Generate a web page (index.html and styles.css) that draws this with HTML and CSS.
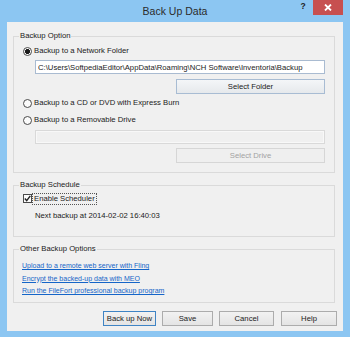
FILE: index.html
```html
<!DOCTYPE HTML>
<html>
<head>
    <meta charset="utf-8">
    <title>Back Up Data</title>
    <link rel="stylesheet" href="styles.css">
</head>

<body>
    <div class='window'>
        <div class='titlebar'>
            <span class='title'>Back Up Data</span>
            <span class='help-btn'>?</span>
            <span class='close-btn'>
                <svg width="8" height="7" viewBox="0 0 8 7">
                    <path d="M1 0.5 L7 6.5 M7 0.5 L1 6.5" stroke="#fff" stroke-width="1.8"/>
                </svg>
            </span>
        </div>
        <div class='client'>
            <fieldset class='group'>
                <legend>Backup Option</legend>
                <div class='group-body option-body'>
                    <label class='option'><input type='radio' name='dest' checked> Backup to a Network Folder</label>
                    <input type='text' class='path' value='C:\Users\SoftpediaEditor\AppData\Roaming\NCH Software\Inventoria\Backup'>
                    <button class='btn btn-side btn-blue'>Select Folder</button>
                    <label class='option option-cd'><input type='radio' name='dest'> Backup to a CD or DVD with Express Burn</label>
                    <label class='option option-drive'><input type='radio' name='dest'> Backup to a Removable Drive</label>
                    <input type='text' class='path path-disabled' value='' disabled>
                    <button class='btn btn-side btn-disabled' disabled>Select Drive</button>
                </div>
            </fieldset>

            <fieldset class='group group-schedule'>
                <legend>Backup Schedule</legend>
                <div class='group-body schedule-body'>
                    <label class='check'>
                        <span class='checkbox'>
                            <svg width="7" height="7" viewBox="0 0 7 7">
                                <path d="M0.8 3.6 L2.7 5.6 L6.3 0.9" stroke="#222" stroke-width="1.4" fill="none"/>
                            </svg>
                        </span>
                        <span class='focus'>Enable Scheduler</span>
                    </label>
                    <div class='next'>Next backup at 2014-02-02 16:40:03</div>
                </div>
            </fieldset>

            <fieldset class='group group-other'>
                <legend>Other Backup Options</legend>
                <div class='group-body links'>
                    <a href='#'>Upload to a remote web server with Fling</a>
                    <a href='#'>Encrypt the backed-up data with MEO</a>
                    <a href='#'>Run the FileFort professional backup program</a>
                </div>
            </fieldset>

            <div class='actions'>
                <button class='btn btn-default btn-now'>Back up Now</button>
                <button class='btn btn-save'>Save</button>
                <button class='btn btn-cancel'>Cancel</button>
                <button class='btn btn-help'>Help</button>
            </div>
        </div>
    </div>
</body>
</html>
```

FILE: styles.css
```css
html, body{
    margin: 0;
    padding: 0;
}
body{
    font-family: "Liberation Sans", Arial, sans-serif;
    font-size: 7.7px;
    line-height: 10px;
    color: #1a1a1a;
}
.window{
    width: 350px;
    height: 337px;
    background-color: #8cc6f2;
    display: flex;
    flex-direction: column;
}
.titlebar{
    height: 22px;
    display: flex;
    padding-left: 52px;
}
.title{
    flex: 1;
    text-align: center;
    font-size: 10.5px;
    line-height: 22px;
    color: #2b2b2b;
}
.help-btn{
    width: 15px;
    font-size: 8.5px;
    font-weight: bold;
    line-height: 13px;
    color: #222;
    text-align: center;
    padding-right: 5px;
    box-sizing: border-box;
}
.close-btn{
    width: 30px;
    height: 15px;
    margin-right: 7px;
    background-color: #c75050;
    display: flex;
    align-items: center;
    justify-content: center;
}
.client{
    height: 309px;
    margin: 0 7px;
    background-color: #f0f0f0;
    padding: 9px 8px 0 6px;
    box-sizing: border-box;
    display: flex;
    flex-direction: column;
}
.group{
    margin: 0;
    padding: 0;
    min-width: 0;
    border: 1px solid #dadada;
}
.group legend{
    margin-left: 5px;
    padding: 0 1px;
    line-height: 10px;
}
.group-schedule, .group-other{
    margin-top: 7px;
}
.group-body{
    display: flex;
    flex-direction: column;
    padding: 4px 9px 9px 9px;
}
.option{
    display: flex;
    align-items: center;
    height: 12px;
    gap: 1px;
}
.option input{
    appearance: none;
    -webkit-appearance: none;
    width: 9px;
    height: 9px;
    margin: 0 1px 0 0;
    border: 1px solid #4a4a4a;
    border-radius: 50%;
    background: #fbfbfb;
    box-sizing: border-box;
}
.option input:checked{
    background: radial-gradient(circle, #1a1a1a 0 2.2px, #fbfbfb 2.8px);
}
.option-cd{
    margin-top: 3px;
}
.option-drive{
    margin-top: 5px;
}
.path{
    margin: 3px 0 0 12px;
    height: 14px;
    width: 290px;
    box-sizing: border-box;
    border: 1px solid #a9bbd1;
    background: #fff;
    font-family: inherit;
    font-size: 7.7px;
    color: #1a1a1a;
    padding: 0 2px;
    outline: none;
}
.path-disabled{
    margin-top: 4px;
    border-color: #d9d9d9;
    background: #f0f0f0;
    box-shadow: inset 0 0 0 1px #f8f8f8;
}
.btn{
    height: 15px;
    padding: 0;
    box-sizing: border-box;
    border: 1px solid #acacac;
    background: linear-gradient(#f2f2f2, #e4e4e4);
    font-family: inherit;
    font-size: 7.7px;
    color: #1a1a1a;
}
.btn-side{
    width: 149px;
    align-self: flex-end;
    margin-top: 5px;
}
.btn-blue{
    border-color: #a8bcd3;
    background: linear-gradient(#f4f6f8, #e6e9ec);
}
.btn-disabled{
    margin-top: 4px;
    border-color: #d6d6d6;
    background: #efefef;
    color: #a2a2a2;
}
.schedule-body{
    padding: 3px 9px 15px 9px;
}
.check{
    display: flex;
    align-items: center;
    height: 11px;
}
.checkbox{
    width: 9px;
    height: 9px;
    box-sizing: border-box;
    border: 1px solid #4a4a4a;
    background: #fbfbfb;
    display: flex;
    align-items: center;
    justify-content: center;
}
.focus{
    margin-left: 1px;
    padding: 0 1px;
    outline: 1px dotted #555;
    line-height: 10px;
}
.next{
    margin: 7px 0 0 12px;
}
.links{
    padding: 6px 8px 4px 8px;
    line-height: 12.5px;
    font-size: 7px;
    align-items: flex-start;
}
.links a{
    color: #1565c8;
}
.actions{
    display: flex;
    justify-content: flex-end;
    margin: 8px -2px 0 0;
}
.btn-default{
    border-color: #3f84c4;
}
.btn-now{
    width: 53px;
}
.btn-save{
    width: 51px;
    margin-left: 6px;
}
.btn-cancel{
    width: 55px;
    margin-left: 6px;
}
.btn-help{
    width: 56px;
    margin-left: 7px;
}
```
